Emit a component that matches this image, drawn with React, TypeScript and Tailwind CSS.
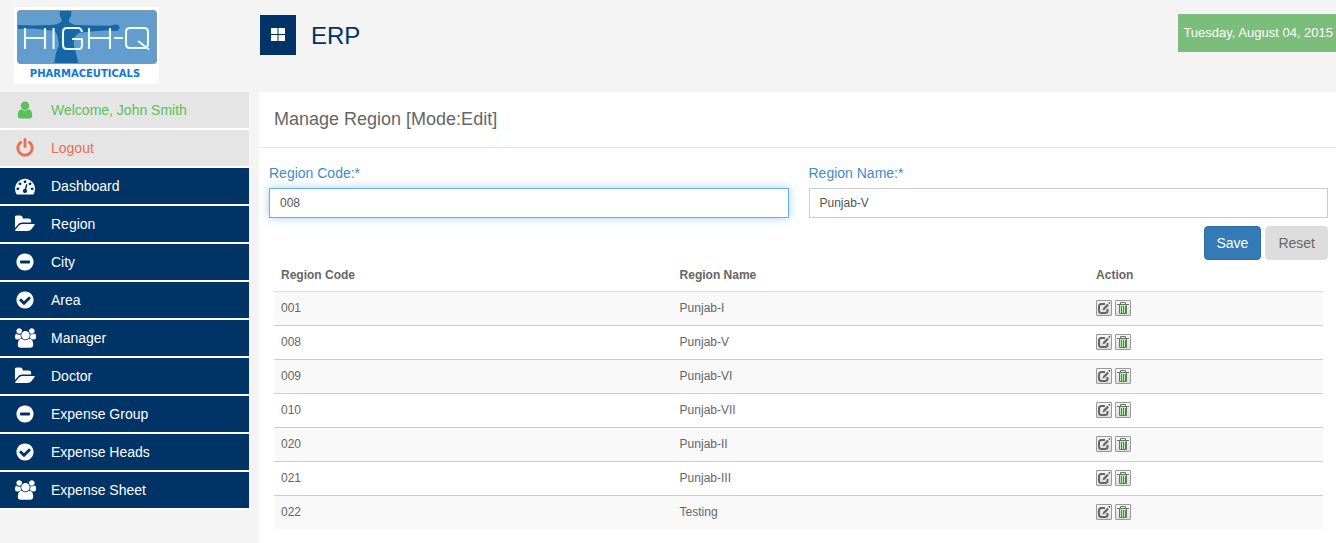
import { useState } from "react";
import type { ReactNode } from "react";

const USER =
  "M1536 1399q0 109-62.5 187t-150.5 78h-854q-88 0-150.5-78t-62.5-187q0-85 8.5-160.5t31.5-152 58.5-131 94-89 134.5-34.5q131 128 313 128t313-128q76 0 134.5 34.5t94 89 58.5 131 31.5 152 8.5 160.5zm-256-887q0 159-112.5 271.5t-271.5 112.5-271.5-112.5-112.5-271.5 112.5-271.5 271.5-112.5 271.5 112.5 112.5 271.5z";
const POWER =
  "M1664 896q0 156-61 298t-164 245-245 164-298 61-298-61-245-164-164-245-61-298q0-182 80.5-343t226.5-270q43-32 95.5-25t83.5 50q32 42 24.5 94.5t-49.5 84.5q-98 74-151.5 181t-53.5 228q0 104 40.5 198.5t109.5 163.5 163.5 109.5 198.5 40.5 198.5-40.5 163.5-109.5 109.5-163.5 40.5-198.5q0-121-53.5-228t-151.5-181q-42-32-49.5-84.5t24.5-94.5q31-43 84-50t95 25q146 109 226.5 270t80.5 343zm-640-768v640q0 52-38 90t-90 38-90-38-38-90v-640q0-52 38-90t90-38 90 38 38 90z";
const GAUGE =
  "M384 1152q0-53-37.5-90.5t-90.5-37.5-90.5 37.5-37.5 90.5 37.5 90.5 90.5 37.5 90.5-37.5 37.5-90.5zm192-448q0-53-37.5-90.5t-90.5-37.5-90.5 37.5-37.5 90.5 37.5 90.5 90.5 37.5 90.5-37.5 37.5-90.5zm428 481l101-382q6-26-7.5-48.5t-38.5-29.5-48 6.5-30 39.5l-101 382q-60 5-107 43.5t-63 98.5q-20 77 20 146t117 89 146-20 89-117q16-60-6-117t-72-91zm660-33q0-53-37.5-90.5t-90.5-37.5-90.5 37.5-37.5 90.5 37.5 90.5 90.5 37.5 90.5-37.5 37.5-90.5zm-640-640q0-53-37.5-90.5t-90.5-37.5-90.5 37.5-37.5 90.5 37.5 90.5 90.5 37.5 90.5-37.5 37.5-90.5zm448 192q0-53-37.5-90.5t-90.5-37.5-90.5 37.5-37.5 90.5 37.5 90.5 90.5 37.5 90.5-37.5 37.5-90.5zm320 448q0 261-141 483-19 29-54 29h-1402q-35 0-54-29-141-221-141-483 0-182 71-348t191-286 286-191 348-71 348 71 286 191 191 286 71 348z";
const FOLDER =
  "M1815 952q0 31-31 66l-336 396q-43 51-120.5 86.5t-143.5 35.5h-1088q-34 0-60.5-13t-26.5-43q0-31 31-66l336-396q43-51 120.5-86.5t143.5-35.5h1088q34 0 60.5 13t26.5 43zm-343-344v160h-832q-94 0-197 47.5t-164 119.5l-337 396-5 6q0-4-.5-12.5t-.5-12.5v-960q0-92 66-158t158-66h320q92 0 158 66t66 158v32h544q92 0 158 66t66 158z";
const MINUS =
  "M1344 960v-128q0-26-19-45t-45-19h-768q-26 0-45 19t-19 45v128q0 26 19 45t45 19h768q26 0 45-19t19-45zm320-64q0 209-103 385.5t-279.5 279.5-385.5 103-385.5-103-279.5-279.5-103-385.5 103-385.5 279.5-279.5 385.5-103 385.5 103 279.5 279.5 103 385.5z";
const CHECK =
  "M1412 734q0-28-18-46l-91-90q-19-19-45-19t-45 19l-408 407-226-226q-19-19-45-19t-45 19l-91 90q-18 18-18 46 0 27 18 45l362 362q19 19 45 19 27 0 46-19l543-543q18-18 18-45zm252 162q0 209-103 385.5t-279.5 279.5-385.5 103-385.5-103-279.5-279.5-103-385.5 103-385.5 279.5-279.5 385.5-103 385.5 103 279.5 279.5 103 385.5z";
const USERS =
  "M593 896q-162 5-265 128h-134q-82 0-138-40.5t-56-118.5q0-353 124-353 6 0 43.5 21t97.5 42.5 119 21.5q67 0 133-23-5 37-5 66 0 159 93 293zm1071 637q0 120-73 189.5t-194 69.5h-874q-121 0-194-69.5t-73-189.5q0-53 3.5-103.5t14-109 26.5-108.5 43-97.5 62-81 85.5-53.5 111.5-20q10 0 43 21.5t73 48 107 48 135 21.5 135-21.5 107-48 73-48 43-21.5q61 0 111.5 20t85.5 53.5 62 81 43 97.5 26.5 108.5 14 109 3.5 103.5zm-1024-1277q0 106-75 181t-181 75-181-75-75-181 75-181 181-75 181 75 75 181zm704 384q0 159-112.5 271.5t-271.5 112.5-271.5-112.5-112.5-271.5 112.5-271.5 271.5-112.5 271.5 112.5 112.5 271.5zm576 225q0 78-56 118.5t-138 40.5h-134q-103-123-265-128 93-134 93-293 0-29-5-66 66 23 133 23 59 0 119-21.5t97.5-42.5 43.5-21q124 0 124 353zm-128-609q0 106-75 181t-181 75-181-75-75-181 75-181 181-75 181 75 75 181z";

type NavItem = { label: string; icon: string; wide?: boolean; tone?: string };

const NAV: NavItem[] = [
  { label: "Welcome, John Smith", icon: USER, tone: "bg-[#e5e5e5] text-[#5bbf5b]" },
  { label: "Logout", icon: POWER, tone: "bg-[#e5e5e5] text-[#e9704f]" },
  { label: "Dashboard", icon: GAUGE },
  { label: "Region", icon: FOLDER, wide: true },
  { label: "City", icon: MINUS },
  { label: "Area", icon: CHECK },
  { label: "Manager", icon: USERS, wide: true },
  { label: "Doctor", icon: FOLDER, wide: true },
  { label: "Expense Group", icon: MINUS },
  { label: "Expense Heads", icon: CHECK },
  { label: "Expense Sheet", icon: USERS, wide: true },
];

const REGIONS = [
  { code: "001", name: "Punjab-I" },
  { code: "008", name: "Punjab-V" },
  { code: "009", name: "Punjab-VI" },
  { code: "010", name: "Punjab-VII" },
  { code: "020", name: "Punjab-II" },
  { code: "021", name: "Punjab-III" },
  { code: "022", name: "Testing" },
];

function Logo() {
  return (
    <svg width="145" height="77" viewBox="0 0 145 77" role="img" aria-label="High-Q Pharmaceuticals">
      <defs>
        <clipPath id="plate">
          <rect x="3" y="3" width="140" height="54" rx="4" />
        </clipPath>
      </defs>
      <rect width="145" height="77" fill="#fff" />
      <g clipPath="url(#plate)">
        <rect x="3" y="3" width="140" height="54" fill="#639dcd" />
        <path
          d="M45.500 3h12l-.5 6-2 3v2.500q2 2.500 7 3.500l14 .5 20 .3 5-1.300q4.500 0 4.500 3 0 3-4 3.500l-7-.8-18 1.300-12 1.500-4 4-1 7 2.500 9 2.500 11H40l2-11 3-8-1.500-9-2.500-5-8-1-14-1.500L3 22v-4l16 .5 17-.5q8 0 11.500-3.500V12l-1.500-3z"
          fill="#1766a6"
        />
        <rect x="3.500" y="3.500" width="139" height="53" rx="4" fill="none" stroke="#7d99ac" strokeWidth="1" />
      </g>
      <g fill="none" stroke="#e9fbfb" strokeWidth="2.100" strokeLinejoin="round">
        <path d="M11 21v21M31 21v21M11 31h20M39.500 21v21M68 25q-1-4-4-4H53q-4 0-4 4v13q0 4 4 4h12q3 0 3-4v-6H58M75 21v21M96 21v21M75 31h21M100 31h9M116 21h14q4 0 4 4v12q0 4-4 4h-14q-4 0-4-4V25q0-4 4-4zM124 34l11 8.500" />
      </g>
      <text
        x="71"
        y="70"
        textAnchor="middle"
        className="fill-[#0f76d8] font-['DejaVu_Sans',sans-serif] text-[10px] font-bold"
      >
        PHARMACEUTICALS
      </text>
    </svg>
  );
}

function NavLink({ item }: { item: NavItem }) {
  return (
    <a
      href="#"
      className={`flex h-[38px] items-center border-b-2 border-white pl-[15px] text-sm ${item.tone ?? "bg-[#003366] text-white"}`}
    >
      <span className="flex w-9 shrink-0">
        <svg
          width={item.wide ? 21 : 20}
          height="20"
          viewBox={item.wide ? "0 0 1920 1792" : "0 0 1792 1792"}
          fill="currentColor"
          aria-hidden="true"
        >
          <path d={item.icon} />
        </svg>
      </span>
      {item.label}
    </a>
  );
}

function ActionButton({ label, children }: { label: string; children: ReactNode }) {
  return (
    <button
      type="button"
      aria-label={label}
      className="flex size-4 items-center justify-center rounded-[1px] border border-[#999] bg-linear-to-b from-[#f6f6f6] to-[#dedede]"
    >
      <svg className="shrink-0" width="14" height="14" viewBox="0 0 14 14" fill="none" aria-hidden="true">
        {children}
      </svg>
    </button>
  );
}

function Field({
  id,
  label,
  value,
  onChange,
  active,
}: {
  id: string;
  label: string;
  value: string;
  onChange: (v: string) => void;
  active?: boolean;
}) {
  return (
    <div className="flex flex-col gap-[5px]">
      <label htmlFor={id} className="text-sm text-[#428bca]">
        {label}
      </label>
      <input
        id={id}
        type="text"
        value={value}
        onChange={(e) => onChange(e.target.value)}
        className={`h-[30px] w-full border bg-white px-2.5 text-xs text-[#555] outline-none ${
          active ? "border-[#66afe9] shadow-[0_0_8px_rgba(102,175,233,0.6)]" : "border-[#ccc]"
        }`}
      />
    </div>
  );
}

export default function App() {
  const [code, setCode] = useState("008");
  const [name, setName] = useState("Punjab-V");

  return (
    <div className="flex min-h-screen flex-col bg-[#f4f4f4] font-['Liberation_Sans',Arial,sans-serif] text-[#666]">
      <header className="flex h-[92px] items-start">
        <div className="w-[260px] shrink-0 pt-[7px] pl-[14px]">
          <Logo />
        </div>
        <button
          type="button"
          aria-label="Toggle menu"
          className="mt-[15px] flex h-10 w-9 items-center justify-center bg-[#003366]"
        >
          <svg width="14" height="14" viewBox="0 0 14 14" fill="#fff" aria-hidden="true">
            <path d="M0 0h6.500v6H0zM7.500 0H14v6H7.500zM0 7h6.500v6H0zM7.500 7H14v6H7.500z" />
          </svg>
        </button>
        <h1 className="mt-4 ml-[15px] text-2xl leading-10 text-[#003366]">ERP</h1>
        <div className="mt-[14px] ml-auto h-[38px] bg-[#7bbd7b] pr-[3px] pl-[5px] text-[13px] leading-[38px] text-white">
          Tuesday, August 04, 2015
        </div>
      </header>

      <div className="flex flex-1 gap-2.5">
        <nav className="w-[249px] shrink-0">
          {NAV.map((item) => (
            <NavLink key={item.label} item={item} />
          ))}
        </nav>

        <main className="min-w-0 flex-1 bg-white">
          <h2 className="h-14 border-b border-[#e5e5e5] pl-[15px] text-lg leading-[54px]">
            Manage Region [Mode:Edit]
          </h2>

          <form className="pt-[15px] pr-2 pl-2.5" onSubmit={(e) => e.preventDefault()}>
            <div className="grid grid-cols-2 gap-5">
              <Field id="code" label="Region Code:*" value={code} onChange={setCode} active />
              <Field id="name" label="Region Name:*" value={name} onChange={setName} />
            </div>
            <div className="mt-2 flex justify-end gap-1">
              <button
                type="submit"
                className="h-[34px] rounded border border-[#2e6da4] bg-[#337ab7] px-3 text-sm text-white"
              >
                Save
              </button>
              <button
                type="reset"
                className="h-[34px] rounded border border-[#ddd] bg-[#ddd] px-3 text-sm text-[#666]"
              >
                Reset
              </button>
            </div>
          </form>

          <div className="pr-[13px] pl-[15px]">
            <table className="w-full table-fixed border-collapse text-left text-xs">
              <thead>
                <tr className="h-[31px] border-b border-[#ddd]">
                  <th className="w-[38%] px-[7px] pb-px">Region Code</th>
                  <th className="w-[39.7%] px-[7px] pb-px">Region Name</th>
                  <th className="px-[7px] pb-px">Action</th>
                </tr>
              </thead>
              <tbody>
                {REGIONS.map((r) => (
                  <tr key={r.code} className="h-[34px] border-b border-[#ccc] last:border-b-0 odd:bg-[#f9f9f9]">
                    <td className="px-[7px]">{r.code}</td>
                    <td className="px-[7px]">{r.name}</td>
                    <td className="px-[7px]">
                      <div className="flex gap-[3px]">
                        <ActionButton label={`Edit ${r.name}`}>
                          <path
                            d="M8 3H4.500Q2 3 2 5.500V9.500Q2 12 4.500 12H8Q10.500 12 10.500 9.500V8"
                            stroke="#666"
                            strokeWidth="2"
                          />
                          <path d="M5.500 9.500l.7-2.500L10.300 2.700l1.600 1.600L7.900 8.600z" fill="#666" />
                          <path d="M11.800 1.300l1.200 1.200" stroke="#555" strokeWidth="1.500" />
                        </ActionButton>
                        <ActionButton label={`Delete ${r.name}`}>
                          <path d="M3 4h8v8H3z" fill="#b9ecb4" />
                          <path
                            d="M1 3.500h12M4.500 3V1.500h5V3M3.500 4v8.500h7V4M5.500 5v7M7.500 5v7M9.500 5v7"
                            stroke="#6a746a"
                          />
                        </ActionButton>
                      </div>
                    </td>
                  </tr>
                ))}
              </tbody>
            </table>
          </div>
        </main>
      </div>
    </div>
  );
}
